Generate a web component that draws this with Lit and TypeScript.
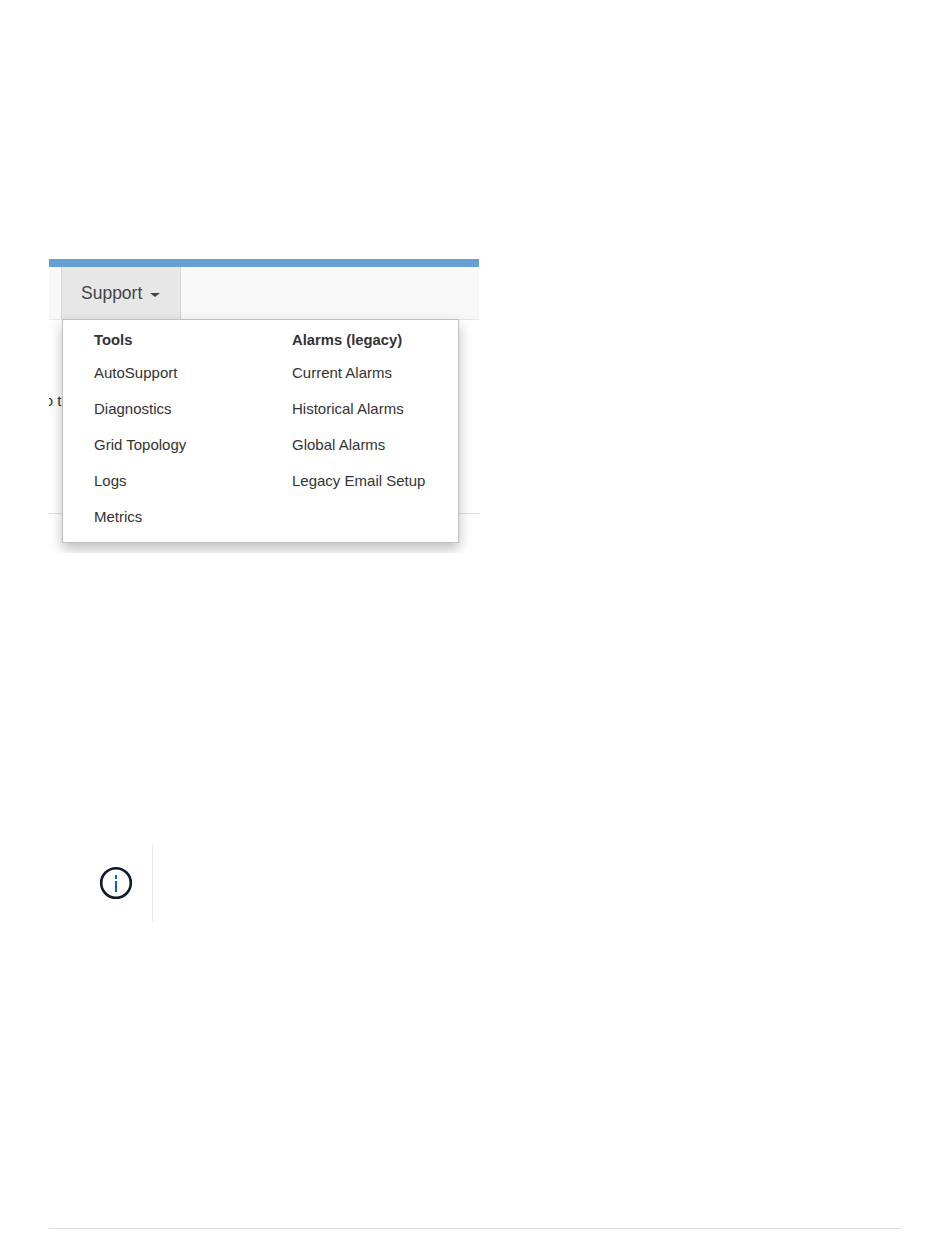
import { LitElement, html, css } from "lit";
import { customElement } from "lit/decorators.js";

@customElement("app-root")
export class AppRoot extends LitElement {
  static styles = css`
    :host { display: block; height: 1248px; background: #fff; font-family: "Liberation Sans", Arial, sans-serif; color: #333; overflow: hidden; }
    .page { padding: 259px 49px 0; display: flex; flex-direction: column; }
    .shot { position: relative; width: 430px; height: 294px; overflow: hidden; background: #fff; }
    .blue { height: 8px; background: #669fd3; }
    .nav { height: 52px; background: #f8f8f8; border-bottom: 1px solid #e7e7e7; padding-left: 12px; display: flex; }
    .tab { width: 99px; background: #e7e7e7; border-left: 1px solid #d4d4d4; border-right: 1px solid #d4d4d4; display: flex; align-items: center; gap: 8px; padding: 0 0 0 19px; font-size: 17.5px; color: #444; }
    .caret { width: 0; height: 0; border-left: 5px solid transparent; border-right: 5px solid transparent; border-top: 4px solid #444; margin-top: 3px; }
    .body { font-size: 15px; padding-top: 73px; height: 194px; box-sizing: border-box; border-bottom: 1px solid #ddd; }
    .clip { margin-left: -8.4px; line-height: 16px; white-space: nowrap; }
    .menu { position: absolute; left: 13px; top: 60px; width: 397px; height: 224px; box-sizing: border-box; background: #fff; border: 1px solid #c0c0c0; box-shadow: 0 6px 12px rgba(0,0,0,.25); display: grid; grid-template-columns: 198px 1fr; padding: 12px 0 0 31px; font-size: 15px; color: #333; }
    .col { display: flex; flex-direction: column; }
    .head { font-weight: 700; font-size: 14.8px; line-height: 16px; height: 16px; margin-bottom: 17px; }
    .item { line-height: 16px; height: 36px; }
    .callout { margin: 291px 0 0 0; height: 78px; display: flex; }
    .icon-cell { width: 104px; box-sizing: border-box; border-right: 1px solid #e8e8e8; display: flex; align-items: center; justify-content: center; padding-left: 31px; }
    .icon-cell svg { display: block; margin-top: -1px; }
    .foot { margin-top: 306px; height: 1px; width: 852px; background: #dcdcdc; }
  `;

  render() {
    const left = ["AutoSupport", "Diagnostics", "Grid Topology", "Logs", "Metrics"];
    const right = ["Current Alarms", "Historical Alarms", "Global Alarms", "Legacy Email Setup"];
    return html`
      <div class="page">
        <div class="shot">
          <div class="blue"></div>
          <div class="nav"><div class="tab">Support <span class="caret"></span></div></div>
          <div class="body"><div class="clip">to the</div></div>
          <div class="menu">
            <div class="col">
              <div class="head">Tools</div>
              ${left.map((t) => html`<div class="item">${t}</div>`)}
            </div>
            <div class="col">
              <div class="head">Alarms (legacy)</div>
              ${right.map((t) => html`<div class="item">${t}</div>`)}
            </div>
          </div>
        </div>
        <div class="callout">
          <div class="icon-cell">
            <svg width="34" height="34" viewBox="0 0 34 34">
              <circle cx="17" cy="17" r="14.8" fill="none" stroke="#0f1c2b" stroke-width="2.6"></circle>
              <rect x="16" y="9" width="2" height="4" fill="#0d62bd"></rect>
              <rect x="16" y="15" width="2" height="11" fill="#0d62bd"></rect>
            </svg>
          </div>
        </div>
        <div class="foot"></div>
      </div>
    `;
  }
}
